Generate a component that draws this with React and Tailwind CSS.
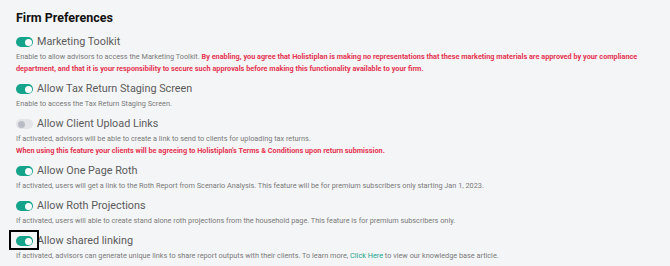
import React from "react";

const rows = [
  {
    label: "Marketing Toolkit",
    on: true,
    desc: "Enable to allow advisors to access the Marketing Toolkit. ",
    warn: "By enabling, you agree that Holistiplan is making no representations that these marketing materials are approved by your compliance department, and that it is your responsibility to secure such approvals before making this functionality available to your firm.",
    inline: true,
  },
  {
    label: "Allow Tax Return Staging Screen",
    on: true,
    desc: "Enable to access the Tax Return Staging Screen.",
  },
  {
    label: "Allow Client Upload Links",
    on: false,
    desc: "If activated, advisors will be able to create a link to send to clients for uploading tax returns.",
    warn: "When using this feature your clients will be agreeing to Holistiplan's Terms & Conditions upon return submission.",
  },
  {
    label: "Allow One Page Roth",
    on: true,
    desc: "If activated, users will get a link to the Roth Report from Scenario Analysis. This feature will be for premium subscribers only starting Jan 1, 2023.",
  },
  {
    label: "Allow Roth Projections",
    on: true,
    desc: "If activated, users will able to create stand alone roth projections from the household page. This feature is for premium subscribers only.",
  },
  {
    label: "Allow shared linking",
    on: true,
    link: true,
    focus: true,
  },
];

const Toggle = ({ on }) => (
  <span
    className={`relative inline-flex h-[10px] w-[17px] shrink-0 rounded-full ${
      on ? "bg-[#14a38b]" : "bg-[#e3e4e8]"
    }`}
  >
    <span
      className={`absolute top-[1.5px] h-[7px] w-[7px] rounded-full ${
        on ? "right-[1.5px] bg-white" : "left-[1.5px] bg-[#b9bcc4]"
      }`}
    />
  </span>
);

export default function App() {
  return (
    <div
      className="h-[266px] w-[670px] overflow-hidden bg-[#f4f5f7] px-4 pt-[6px]"
      style={{ fontFamily: "Roboto, 'Liberation Sans', sans-serif" }}
    >
      <h2 className="mb-[3px] text-[12.5px] font-bold leading-[24px] text-[#111]">
        Firm Preferences
      </h2>
      <div className="flex flex-col gap-[5px]">
        {rows.map((r) => (
          <div key={r.label}>
            <div className="flex h-[18px] items-center gap-[4px]">
              <span className="relative flex items-center">
                <Toggle on={r.on} />
                {r.focus && (
                  <span className="absolute -left-[7px] -top-[6px] h-[20px] w-[30px] border-2 border-black" />
                )}
              </span>
              <span className="text-[10.8px] text-[#5b5b5b]">{r.label}</span>
            </div>
            <div className="w-[630px] text-[7.3px] leading-[12px] text-[#7a7a7a]">
              {r.link ? (
                <>
                  If activated, advisors can generate unique links to share
                  report outputs with their clients. To learn more,{" "}
                  <a className="text-[#1aa58d]">Click Here</a> to view our
                  knowledge base article.
                </>
              ) : r.inline ? (
                <>
                  {r.desc}
                  <span className="font-bold text-[#e5334f]">{r.warn}</span>
                </>
              ) : (
                <>
                  <div>{r.desc}</div>
                  {r.warn && (
                    <div className="font-bold text-[#e5334f]">{r.warn}</div>
                  )}
                </>
              )}
            </div>
          </div>
        ))}
      </div>
    </div>
  );
}
